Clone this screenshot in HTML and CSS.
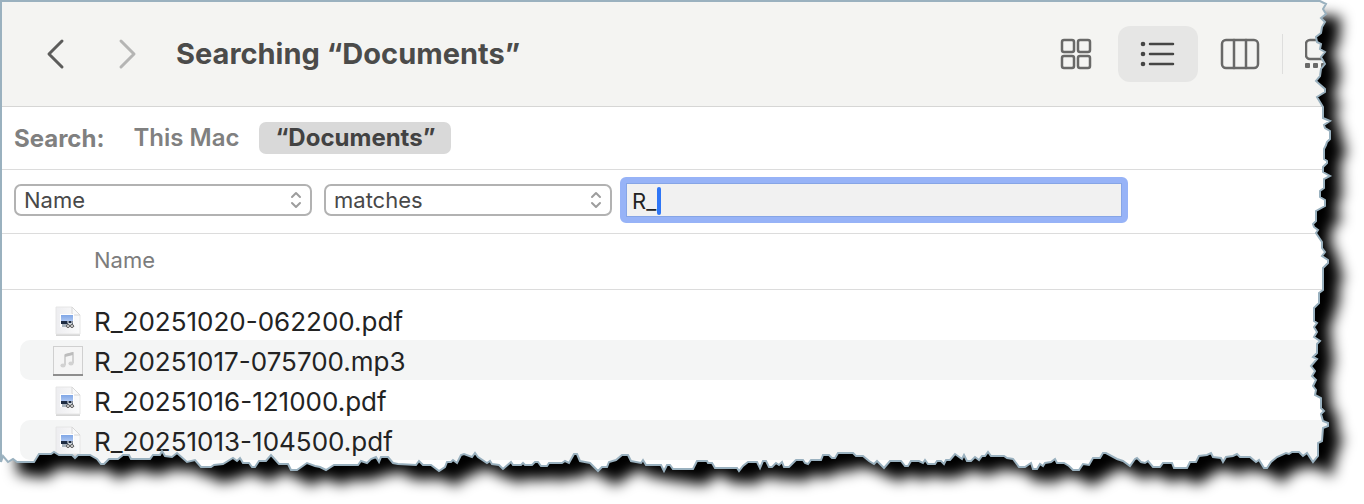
FILE: index.html
```html
<!DOCTYPE html>
<html lang="en">

<head>
    <meta charset="UTF-8">
    <meta name="viewport" content="width=device-width, initial-scale=1.0">
    <title>Searching “Documents”</title>
    <link rel="stylesheet" href="styles.css">
</head>

<body>
    <div class="window">
        <!-- Toolbar -->
        <header class="toolbar">
            <button class="navBtn" type="button" aria-label="Back">
                <svg width="24" height="32" viewBox="0 0 24 32"><path d="M18 3 5 16l13 13"/></svg>
            </button>
            <button class="navBtn" type="button" aria-label="Forward" disabled>
                <svg width="24" height="32" viewBox="0 0 24 32"><path d="m5 3 13 13L5 29"/></svg>
            </button>
            <h1 class="title">Searching “Documents”</h1>

            <div class="views">
                <button class="viewBtn" type="button" aria-label="Icons">
                    <svg width="32" height="32" viewBox="0 0 32 32">
                        <rect x="2" y="2" width="12" height="12" rx="2"/>
                        <rect x="18" y="2" width="12" height="12" rx="2"/>
                        <rect x="2" y="18" width="12" height="12" rx="2"/>
                        <rect x="18" y="18" width="12" height="12" rx="2"/>
                    </svg>
                </button>
                <button class="viewBtn active" type="button" aria-label="List">
                    <svg width="36" height="32" viewBox="0 0 36 32">
                        <path d="M10 6h23M10 16h23M10 26h23"/>
                        <g class="solid">
                            <circle cx="3" cy="6" r="2.3"/>
                            <circle cx="3" cy="16" r="2.3"/>
                            <circle cx="3" cy="26" r="2.3"/>
                        </g>
                    </svg>
                </button>
                <button class="viewBtn" type="button" aria-label="Columns">
                    <svg width="40" height="32" viewBox="0 0 40 32">
                        <rect x="2" y="2" width="36" height="28" rx="4"/>
                        <path d="M14 2v28M26 2v28"/>
                    </svg>
                </button>
                <span class="divider"></span>
                <button class="viewBtn" type="button" aria-label="Gallery">
                    <svg width="40" height="32" viewBox="0 0 40 32">
                        <rect x="1" y="2" width="38" height="19" rx="4"/>
                        <g class="solid">
                            <rect x="0" y="25" width="5" height="5" rx="1"/>
                            <rect x="8" y="25" width="5" height="5" rx="1"/>
                            <rect x="16" y="25" width="5" height="5" rx="1"/>
                            <rect x="24" y="25" width="5" height="5" rx="1"/>
                            <rect x="32" y="25" width="5" height="5" rx="1"/>
                        </g>
                    </svg>
                </button>
            </div>
        </header>

        <!-- Search scope -->
        <div class="scope">
            <span class="scopeLabel">Search:</span>
            <button class="scopeBtn" type="button">This Mac</button>
            <button class="scopeBtn selected" type="button">“Documents”</button>
        </div>

        <!-- Search criteria -->
        <form class="criteria">
            <div class="selectBox wide">
                <select aria-label="Attribute">
                    <option>Name</option>
                </select>
                <svg class="arrows" width="12" height="18" viewBox="0 0 12 18"><path d="m2 6 4-4 4 4M2 12l4 4 4-4"/></svg>
            </div>
            <div class="selectBox">
                <select aria-label="Condition">
                    <option>matches</option>
                </select>
                <svg class="arrows" width="12" height="18" viewBox="0 0 12 18"><path d="m2 6 4-4 4 4M2 12l4 4 4-4"/></svg>
            </div>
            <div class="query">
                <input type="text" value="R_" aria-label="Search text">
                <span class="caret"></span>
            </div>
        </form>

        <!-- Results -->
        <table class="results">
            <thead>
                <tr><th>Name</th></tr>
            </thead>
            <tbody>
                <tr><td><div class="file"><svg class="fileIcon" viewBox="0 0 32 32"><use href="#pdf"/></svg>R_20251020-062200.pdf</div></td></tr>
                <tr><td><div class="file"><svg class="fileIcon" viewBox="0 0 32 32"><use href="#audio"/></svg>R_20251017-075700.mp3</div></td></tr>
                <tr><td><div class="file"><svg class="fileIcon" viewBox="0 0 32 32"><use href="#pdf"/></svg>R_20251016-121000.pdf</div></td></tr>
                <tr><td><div class="file"><svg class="fileIcon" viewBox="0 0 32 32"><use href="#pdf"/></svg>R_20251013-104500.pdf</div></td></tr>
            </tbody>
        </table>

        <!-- Torn paper edge with its shadow -->
        <svg class="torn" viewBox="0 0 1364 504" preserveAspectRatio="none" aria-hidden="true">
            <defs>
                <path id="edge" d="M1 1H1320L1326 4 1323 9 1326 14 1321 18 1325 22 1322 27 1321 33 1316 37 1317 42 1321 44 1320 49 1325 52 1321 57 1325 64 1321 69 1320 76 1316 81 1325 89 1325 92 1317 97 1323 107 1323 118 1330 121 1324 125 1325 128 1330 131 1330 139 1327 142 1326 145 1324 149 1324 159 1327 161 1327 163 1323 167 1323 172 1330 176 1324 179 1324 188 1320 191 1320 197 1325 200 1325 206 1316 211 1316 221 1313 224 1314 227 1318 230 1316 233 1322 242 1322 248 1325 252 1322 256 1328 260 1328 263 1323 268 1323 290 1319 293 1319 303 1314 308
                    1314 321 1317 323 1314 327 1317 332 1314 337 1320 341 1317 344 1317 353 1313 357 1317 359 1311 366 1315 371 1312 376 1316 380 1313 386 1316 390 1315 395 1321 398 1321 408 1324 411 1321 414 1323 421 1328 423 1328 426 1323 428 1322 441 1318 443 1318 456 1313 462 1307 453 1303 456 1299 452 1292 452 1289 454 1286 453 1277 457 1271 462 1267 468 1264 468
                    1259 460 1256 462 1250 457 1240 457 1237 454 1233 456 1226 457 1223 462 1221 458 1213 457 1211 453 1207 455 1199 456 1196 462 1190 462 1187 468 1174 468 1172 463 1163 463 1160 467 1153 467 1148 461 1145 463 1141 462 1137 458 1135 459 1130 466 1123 461 1117 459 1106 453 1103 453 1100 458 1093 458 1089 465 1083 464 1079 470 1073 470 1069 466 1064 463 1057 463 1055 459 1051 462 1045 463 1043 466 1040 464 1037 469 1033 469 1031 463 1025 467 1019 467 1013 459 1007 458 1004 456
                    991 456 988 452 985 456 982 456 979 460 975 457 971 461 967 461 964 455 962 459 955 454 950 460 946 460 944 464 941 461 937 461 935 464 928 464 925 460 923 463 919 461 911 461 908 466 905 466 901 461 890 461 884 468 877 461 874 464 869 461 863 456 856 456 853 453 838 453 835 458 832 458 829 455 823 455 821 460 811 460 808 464 805 463 803 460 796 460 789 467 784 467 782 462 779 465 776 463 772 467 769 467 766 461 763 461 760 468 757 462 748 462 743 466 739 471 737 468 715 468 712 463 708 463 707 461 697 461 693 469 673 469 670 465 667 465
                    664 471 661 465 646 465 643 460 641 463 631 461 628 455 622 455 616 460 609 462 607 467 602 467 598 471 590 463 580 461 577 454 574 454 569 463 565 461 562 463 549 463 547 466 541 466 538 462 535 462 532 465 525 465 523 463 521 465 513 465 511 462 503 469 499 465 492 464 490 461 487 463 478 457 475 453 472 457 464 454 461 455 457 463 453 460 451 462 447 462 445 467 439 471 431 465 423 465 419 461 416 465 398 464 393 463 388 457 381 457 379 462 376 457 371 459 367 463 361 461 358 465 334 465
                    326 470 320 467 315 466 307 463 297 470 291 470 288 464 279 464 271 455 266 461 259 461 255 467 252 467 249 463 243 463 240 458 237 461 233 458 223 464 214 465 211 467 201 467 195 460 187 462 177 453 172 457 165 456 162 451 160 455 153 455 150 459 131 459 129 455 123 455 118 459 109 459 104 464 101 464 97 459 90 455 78 455 75 458 72 455 59 455 54 452 51 454 39 454 34 462 17 462 13 459 8 462 3 456 1 462Z"/>
                <mask id="outside">
                    <rect width="1364" height="504" fill="#fff"/>
                    <use href="#edge" fill="#000"/>
                </mask>
                <filter id="soft" x="-5%" y="-10%" width="110%" height="120%" color-interpolation-filters="sRGB">
                    <feGaussianBlur stdDeviation="7"/>
                </filter>
            </defs>
            <g mask="url(#outside)">
                <rect width="1364" height="504" fill="#fff"/>
                <g filter="url(#soft)"><use href="#edge" x="16" y="15"/></g>
            </g>
            <use href="#edge" fill="none" stroke="#9ab1bf" stroke-width="2"/>
        </svg>
    </div>

    <!-- File icons -->
    <svg class="symbols" aria-hidden="true">
        <defs>
            <linearGradient id="paper" x2="1">
                <stop offset="0" stop-color="#ededf0"/>
                <stop offset="1" stop-color="#fbfbfb"/>
            </linearGradient>
            <linearGradient id="sky" x2="0" y2="1">
                <stop offset="0" stop-color="#7fa6e6"/>
                <stop offset="1" stop-color="#b4cbf3"/>
            </linearGradient>
        </defs>
        <symbol id="pdf" viewBox="0 0 32 32">
            <path d="M4 3h16l8 8v20H4z" fill="#d6d6d6"/>
            <path d="M4 2h16l8 8v19H4z" fill="url(#paper)" stroke="#e6e6e6"/>
            <path d="M20 2v6q0 2 2 2h6z" fill="#fafafa" stroke="#d8d8d8"/>
            <path d="M8 9h14v13H8z" fill="#fff"/>
            <path d="M9 10h12v7H9z" fill="url(#sky)"/>
            <path d="M9 16h12v3H9z" fill="#1d2b43"/>
            <path d="M10 19h5l1 3h-6z" fill="#a9b3bd"/>
            <path d="m14 22 2-4h4l3 4z" fill="#cfd5da"/>
            <circle cx="16" cy="21" r="1.500" fill="#eee" stroke="#555"/>
            <circle cx="20" cy="21" r="1.500" fill="#eee" stroke="#555"/>
            <path d="M15 17h2M19 17h2" stroke="#fff"/>
        </symbol>
        <symbol id="audio" viewBox="0 0 32 32">
            <path d="M1 1h30v30H1z" fill="#d0d0d0"/>
            <path d="M1 30h30" stroke="#8e8e8e" stroke-width="2"/>
            <path d="M2 2h28v27H2z" fill="#f5f5f5"/>
            <path d="M13 20v-10l8-2v10" fill="none" stroke="#c6c6c6" stroke-width="1.500"/>
            <path d="m13 9 8-2v3l-8 2z" fill="#bcbcbc"/>
            <ellipse cx="11" cy="20.500" rx="2.600" ry="2" fill="#d2d2d2"/>
            <ellipse cx="19" cy="18.500" rx="2.600" ry="2" fill="#d2d2d2"/>
        </symbol>
    </svg>
</body>

</html>
```
FILE: styles.css
```css
* {
    box-sizing: border-box;
}

body {
    font-family: Inter, "Liberation Sans", sans-serif;
    margin: 0;
    background-color: #fff;
    color: #232323;
}

button,
input,
select {
    font-family: inherit;
    margin: 0;
}

button {
    border: none;
    background: none;
    padding: 0;
}

.window {
    position: relative;
    padding-bottom: 44px;
    overflow: hidden;
}

/* Toolbar */
.toolbar {
    display: flex;
    align-items: center;
    height: 107px;
    padding-top: 2px;
    padding-left: 44px;
    background-color: #f4f4f2;
    border-bottom: 1px solid #d6d6d5;
}

.navBtn {
    display: flex;
    margin-right: 48px;
}

.navBtn svg {
    fill: none;
    stroke: #5c5c5b;
    stroke-width: 3;
    stroke-linecap: round;
    stroke-linejoin: round;
}

.navBtn:disabled svg {
    stroke: #b5b5b4;
}

.title {
    margin: 0 auto 0 -12px;
    font-size: 29px;
    line-height: 36px;
    font-weight: 700;
    color: #4b4b4a;
    white-space: nowrap;
}

.views {
    display: flex;
    align-items: center;
    gap: 2px;
    margin-right: -1px;
}

.viewBtn {
    display: flex;
    align-items: center;
    justify-content: center;
    width: 80px;
    height: 56px;
    border-radius: 12px;
}

.viewBtn svg {
    fill: none;
    stroke: #696968;
    stroke-width: 2.5;
    stroke-linecap: round;
}

.viewBtn.active {
    background-color: #e6e6e5;
}

.viewBtn.active svg {
    stroke: #454544;
}

.viewBtn .solid {
    fill: #696968;
    stroke: none;
}

.viewBtn.active .solid {
    fill: #454544;
}

.divider {
    width: 1px;
    height: 40px;
    background-color: #dededd;
}

/* Search scope */
.scope {
    display: flex;
    align-items: center;
    height: 63px;
    padding-left: 14px;
    border-bottom: 1px solid #dcdcdc;
    font-size: 24px;
    font-weight: 700;
    color: #808080;
}

.scopeLabel {
    margin-right: 13px;
}

.scopeBtn {
    height: 32px;
    margin-right: 4px;
    padding: 0 16px;
    border-radius: 7px;
    font-size: 24px;
    font-weight: 600;
    line-height: 32px;
    color: #808080;
}

.scopeBtn.selected {
    background-color: #d9d9d9;
    font-weight: 700;
    color: #424242;
}

/* Search criteria */
.criteria {
    display: flex;
    align-items: center;
    height: 64px;
    padding-left: 14px;
    padding-bottom: 3px;
    border-bottom: 1px solid #dcdcdc;
}

.selectBox {
    position: relative;
    width: 288px;
    margin-right: 8px;
}

.selectBox.wide {
    width: 298px;
    margin-right: 12px;
}

.selectBox select {
    appearance: none;
    display: block;
    width: 100%;
    height: 32px;
    padding: 0 8px;
    border: 2px solid #b2b2b2;
    border-radius: 7px;
    background-color: #fff;
    font-size: 22px;
    color: #484848;
}

.arrows {
    position: absolute;
    top: 7px;
    right: 10px;
    fill: none;
    stroke: #9d9d9d;
    stroke-width: 2;
    stroke-linecap: round;
    stroke-linejoin: round;
    pointer-events: none;
}

.query {
    position: relative;
    width: 508px;
}

.query input {
    display: block;
    width: 100%;
    height: 46px;
    padding: 2px 6px 0;
    border: 6px solid #97b3f7;
    border-radius: 6px;
    outline: none;
    background-color: #f1f1f1;
    box-shadow: inset 0 0 0 1px #86a5e6;
    font-size: 22px;
    color: #232323;
}

.caret {
    position: absolute;
    top: 10px;
    left: 37px;
    width: 4px;
    height: 28px;
    border-radius: 2px;
    background-color: #2f76f6;
}

/* Results */
.results {
    width: 100%;
    border-spacing: 0;
}

.results th {
    height: 56px;
    padding: 0 0 4px 94px;
    border-bottom: 1px solid #dcdcdc;
    font-size: 22px;
    font-weight: 400;
    text-align: left;
    color: #7c7c7c;
}

.results tbody::before {
    content: "";
    display: block;
    height: 10px;
}

.results td {
    padding: 0 0 0 20px;
}

.file {
    display: flex;
    align-items: center;
    gap: 10px;
    height: 40px;
    padding-top: 2px;
    padding-left: 32px;
    border-radius: 10px 0 0 10px;
    font-size: 26px;
}

.results tr:nth-child(even) .file {
    background-color: #f4f5f5;
}

.fileIcon {
    width: 32px;
    height: 32px;
}

/* Torn edge */
.torn {
    position: absolute;
    top: 0;
    left: 0;
    width: 100%;
    height: 100%;
    pointer-events: none;
}

.symbols {
    position: absolute;
    width: 0;
    height: 0;
}
```
